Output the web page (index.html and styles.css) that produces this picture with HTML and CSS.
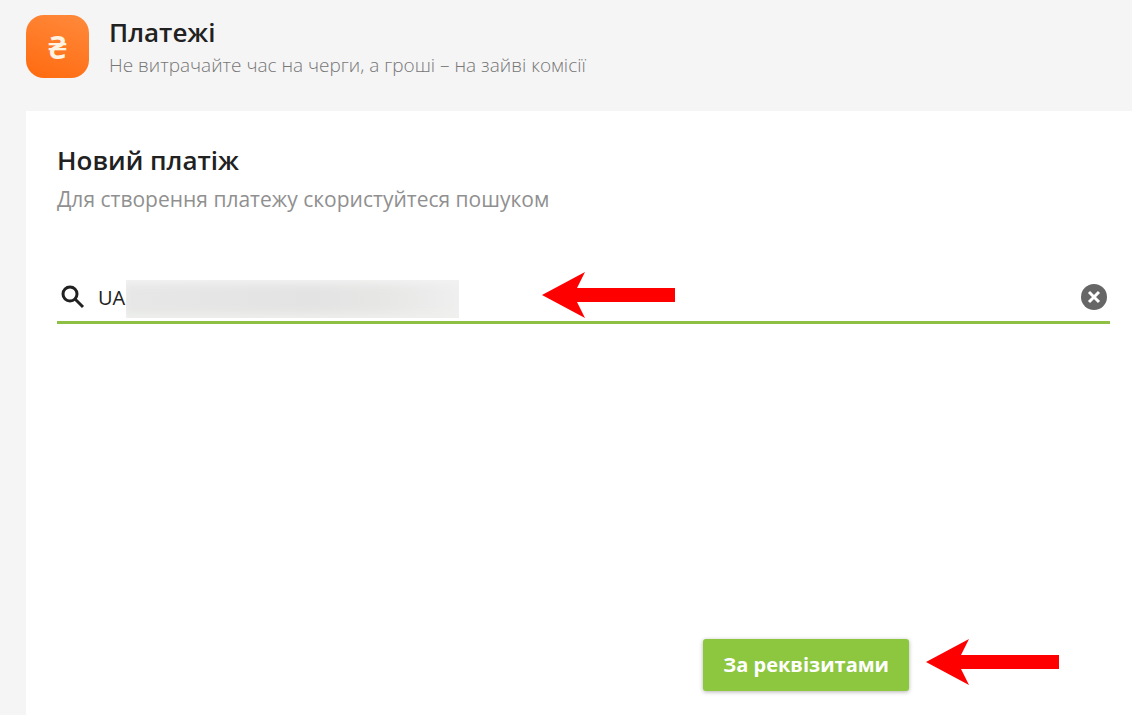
FILE: index.html
```html
<!DOCTYPE html>
<html lang="uk">
  <head>
    <meta charset="UTF-8" />
    <meta name="viewport" content="width=device-width, initial-scale=1.0" />
    <title>Платежі</title>
    <link rel="stylesheet" href="styles.css">
  </head>
  <body>
    <header class="pageHeader">
      <div class="pageIcon" aria-hidden="true">₴</div>
      <div>
        <h1 class="pageTitle">Платежі</h1>
        <p class="pageSubtitle">Не витрачайте час на черги, а гроші – на зайві комісії</p>
      </div>
    </header>

    <main class="card">
      <h2 class="cardTitle">Новий платіж</h2>
      <label class="cardHint" for="paymentSearch">Для створення платежу скористуйтеся пошуком</label>

      <!-- Пошук -->
      <form class="search">
        <svg class="searchIcon" viewBox="0 0 24 24" width="24" height="24" aria-hidden="true">
          <circle cx="9" cy="9" r="7" />
          <path d="M14 14L22 22" />
        </svg>
        <div class="searchField">
          <input id="paymentSearch" class="searchInput" type="text" value="UA" autocomplete="off" />
          <span class="hiddenNumber"></span>
          <svg class="arrow searchArrow" viewBox="0 0 133 46" width="133" height="46" aria-hidden="true">
            <path d="M0 23L43 0L35 16H133V30H35L43 46Z" />
          </svg>
        </div>
        <button class="clearButton" type="reset" aria-label="Очистити">
          <svg viewBox="0 0 26 26" width="26" height="26" aria-hidden="true">
            <circle cx="13" cy="13" r="13" />
            <path d="M8 8L18 18M18 8L8 18" />
          </svg>
        </button>
      </form>

      <div class="actions">
        <button class="submitButton" type="button">За реквізитами</button>
        <svg class="arrow" viewBox="0 0 133 46" width="133" height="46" aria-hidden="true">
          <path d="M0 23L43 0L35 16H133V30H35L43 46Z" />
        </svg>
      </div>
    </main>
  </body>
</html>
```

FILE: styles.css
```css
* {
  box-sizing: border-box;
}

body {
  margin: 0;
  min-height: 100vh;
  display: flex;
  flex-direction: column;
  background: #f5f5f5;
  color: #212121;
  font-family: "Open Sans", "Noto Sans", sans-serif;
}

h1,
h2,
p {
  margin: 0;
}

.pageHeader {
  display: flex;
  gap: 20px;
  padding: 15px 26px 30px;
}

.pageIcon {
  display: flex;
  align-items: center;
  justify-content: center;
  width: 63px;
  height: 63px;
  border-radius: 18px;
  background: linear-gradient(200deg, #ff8a3c, #ff6a0f);
  color: #fff3e4;
  font-size: 32px;
  font-weight: 600;
  line-height: 32px;
}

.pageTitle,
.cardTitle {
  font-size: 26px;
  font-weight: 600;
  line-height: 34px;
}

.pageSubtitle {
  color: #777;
  font-size: 19px;
  font-weight: 300;
  line-height: 32px;
}

.card {
  flex: 1;
  display: flex;
  flex-direction: column;
  margin-left: 26px;
  padding: 32px 22px 24px 31px;
  background: #fff;
}

.cardHint {
  margin-top: 6px;
  color: #909090;
  font-size: 21px;
  font-weight: 400;
  line-height: 32px;
}

.search {
  display: flex;
  align-items: center;
  margin-top: 56px;
  padding: 2px 3px 0 4px;
  border-bottom: 3px solid #8fc046;
}

.searchIcon {
  fill: none;
  stroke: #212121;
  stroke-width: 3;
}

.searchField {
  position: relative;
  flex: 1;
  margin-left: 13px;
}

.searchInput {
  display: block;
  width: 100%;
  height: 48px;
  padding: 0;
  border: none;
  outline: none;
  background: none;
  color: #212121;
  font-family: inherit;
  font-size: 20px;
}

.hiddenNumber {
  position: absolute;
  top: 7px;
  left: 28px;
  width: 333px;
  height: 38px;
  background: linear-gradient(90deg, #e6e7e6, #e3e3e3 55%, #e6e6e5 75%, #efefef);
  box-shadow: inset 0 8px 10px -4px #f2f2f2, inset 0 -8px 10px -4px #f0f1ee;
}

.arrow {
  fill: #fe0000;
}

.searchArrow {
  position: absolute;
  top: -1px;
  left: 444px;
}

.clearButton {
  display: flex;
  padding: 0;
  border: none;
  background: none;
  cursor: pointer;
}

.clearButton circle {
  fill: #666;
}

.clearButton path {
  stroke: #fff;
  stroke-width: 3;
}

.actions {
  display: flex;
  align-items: flex-start;
  justify-content: flex-end;
  gap: 17px;
  margin-top: auto;
  padding-right: 51px;
}

.submitButton {
  padding: 10px 20px;
  border: none;
  border-radius: 3px;
  background: #8dc63f;
  box-shadow: 0 1px 4px rgba(0, 0, 0, 0.3);
  color: #fff;
  font-family: inherit;
  font-size: 20px;
  font-weight: 700;
  line-height: 32px;
  cursor: pointer;
}
```
